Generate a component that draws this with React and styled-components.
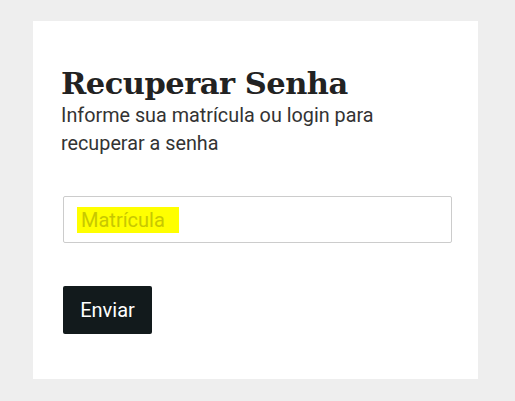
import React from "react";
import styled, { createGlobalStyle } from "styled-components";

const GlobalStyle = createGlobalStyle`
  html, body {
    margin: 0;
    padding: 0;
    background: #eeeeee;
    font-family: Roboto, "Noto Sans", sans-serif;
  }
`;

const Page = styled.div`
  padding: 21px 0 0 33px;
`;

const Card = styled.div`
  width: 445px;
  height: 358px;
  box-sizing: border-box;
  background: #ffffff;
  padding: 43px 26px 0 28px;
`;

const Title = styled.h1`
  margin: 0;
  font-family: "DejaVu Serif", serif;
  font-weight: 700;
  font-size: 30.5px;
  line-height: 38px;
  color: #222222;
  letter-spacing: -0.5px;
`;

const Subtitle = styled.p`
  margin: 0;
  font-size: 19.8px;
  line-height: 28px;
  color: #333333;
  width: 360px;
`;

const InputBox = styled.div`
  display: flex;
  align-items: center;
  width: 389px;
  height: 47px;
  box-sizing: border-box;
  margin: 38px 0 0 2px;
  border: 1px solid #cccccc;
  border-radius: 2px;
  padding: 0 13px;
`;

const Placeholder = styled.span`
  display: inline-block;
  height: 26px;
  line-height: 26px;
  padding: 0 14px 0 4px;
  background: #ffff00;
  color: #c8c800;
  font-size: 20px;
`;

const Button = styled.button`
  display: block;
  margin: 43px 0 0 2px;
  width: 89px;
  height: 48px;
  border: none;
  border-radius: 2px;
  background: #121a1c;
  color: #ffffff;
  font-family: Roboto, sans-serif;
  font-size: 20px;
  cursor: pointer;
`;

export default function App() {
  return (
    <>
      <GlobalStyle />
      <Page>
        <Card>
          <Title>Recuperar Senha</Title>
          <Subtitle>Informe sua matrícula ou login para recuperar a senha</Subtitle>
          <InputBox>
            <Placeholder>Matrícula</Placeholder>
          </InputBox>
          <Button>Enviar</Button>
        </Card>
      </Page>
    </>
  );
}
